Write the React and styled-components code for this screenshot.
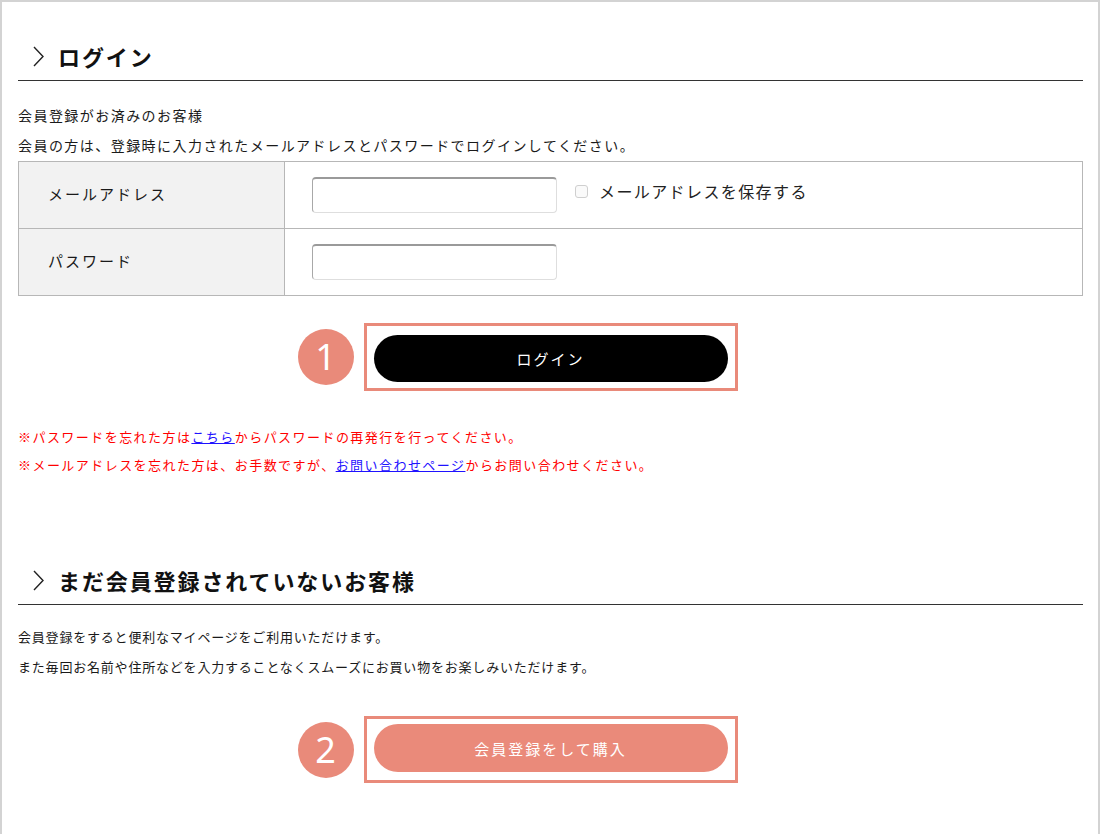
import React from "react";
import styled, { createGlobalStyle } from "styled-components";

const GlobalStyle = createGlobalStyle`
  html, body {
    margin: 0;
    padding: 0;
    background: #fff;
  }
  body {
    font-family: "Noto Sans CJK JP", "Noto Sans", sans-serif;
    color: #1a1a1a;
  }
`;

const Frame = styled.div`
  box-sizing: border-box;
  width: 1100px;
  min-height: 834px;
  border: 2px solid #d3d3d3;
  border-bottom: none;
  padding: 0 15px 40px 16px;
`;

const Section = styled.section`
  padding-top: ${(p) => p.top}px;
`;

const Heading = styled.h2`
  display: flex;
  align-items: center;
  gap: 14px;
  margin: 0;
  padding: 0 0 8px 15px;
  height: 32px;
  font-size: 22px;
  line-height: 32px;
  font-weight: 700;
  letter-spacing: 1.9px;
  border-bottom: 1px solid #333;
  color: #111;
`;

const Chevron = () => (
  <svg width="11" height="21" viewBox="0 0 11 21" fill="none">
    <path d="M1 1 L10 10.5 L1 20" stroke="#222" strokeWidth="1.4" />
  </svg>
);

const Lead = styled.div`
  margin-top: ${(p) => p.gap}px;
  font-size: ${(p) => p.size}px;
  letter-spacing: ${(p) => p.spacing}px;
  line-height: 30px;
  p {
    margin: 0;
  }
`;

const Table = styled.div`
  display: grid;
  grid-template-columns: 266px 1fr;
  margin-top: 1px;
  border: 1px solid #b7b7b7;
  border-bottom: none;
`;

const Label = styled.div`
  display: flex;
  align-items: center;
  box-sizing: border-box;
  height: 67px;
  padding: 0 0 4px 29px;
  background: #f2f2f2;
  border-right: 1px solid #b7b7b7;
  border-bottom: 1px solid #b7b7b7;
  font-size: 15px;
  letter-spacing: 2px;
`;

const Field = styled.div`
  display: flex;
  align-items: center;
  box-sizing: border-box;
  padding: 0 0 0 27px;
  height: 67px;
  gap: 18px;
  border-bottom: 1px solid #b7b7b7;
`;

const Input = styled.input`
  box-sizing: border-box;
  width: 245px;
  height: 36px;
  border: 1px solid #dedede;
  border-top: 2px solid #9a9a9a;
  border-left: 1px solid #a8a8a8;
  border-radius: 4px;
  background: #fff;
  outline: none;
`;

const Check = styled.label`
  display: flex;
  align-items: center;
  gap: 11px;
  font-size: 16px;
  letter-spacing: 1.4px;
  margin-top: -8px;
  color: #222;
`;

const Box = styled.span`
  display: inline-block;
  width: 11px;
  height: 11px;
  border: 1px solid #cfcfcf;
  border-radius: 3px;
  background: #fafafa;
`;

const ActionRow = styled.div`
  display: flex;
  justify-content: center;
  margin-top: ${(p) => p.gap}px;
`;

const Highlight = styled.div`
  position: relative;
  box-sizing: border-box;
  width: 374px;
  border: 3px solid #e98a7a;
  padding: ${(p) => p.pad};
`;

const Badge = styled.span`
  position: absolute;
  left: -69px;
  top: 50%;
  transform: translateY(-50%);
  width: 56px;
  height: 56px;
  border-radius: 50%;
  background: #e98a7a;
  color: #fff;
  display: flex;
  align-items: center;
  justify-content: center;
  font-family: "Noto Sans", sans-serif;
  font-size: 36px;
  font-weight: 400;
  line-height: 1;
`;

const PillButton = styled.button`
  display: block;
  width: 100%;
  height: ${(p) => p.h}px;
  border: none;
  border-radius: 24px;
  background: ${(p) => (p.salmon ? "#ea8a7a" : "#000")};
  color: #fff;
  font-family: "Noto Sans CJK JP", sans-serif;
  font-size: 15px;
  letter-spacing: 2px;
  cursor: pointer;
`;

const Notes = styled.div`
  margin-top: 32px;
  color: #f00;
  font-size: 13px;
  letter-spacing: 1.45px;
  line-height: 28px;
  p {
    margin: 0;
  }
  a {
    color: #1f12ff;
    text-decoration: underline;
  }
`;

export default function App() {
  return (
    <>
      <GlobalStyle />
      <Frame>
        <Section top={38}>
          <Heading>
            <Chevron />
            ログイン
          </Heading>
          <Lead gap={19} size={14} spacing={1.45}>
            <p>会員登録がお済みのお客様</p>
            <p>会員の方は、登録時に入力されたメールアドレスとパスワードでログインしてください。</p>
          </Lead>
          <Table>
            <Label>メールアドレス</Label>
            <Field>
              <Input type="text" />
              <Check>
                <Box />
                メールアドレスを保存する
              </Check>
            </Field>
            <Label>パスワード</Label>
            <Field>
              <Input type="password" />
            </Field>
          </Table>
          <ActionRow gap={27}>
            <Highlight pad="9px 7px 6px">
              <Badge>1</Badge>
              <PillButton h={47}>ログイン</PillButton>
            </Highlight>
          </ActionRow>
          <Notes>
            <p>
              ※パスワードを忘れた方は<a href="#">こちら</a>からパスワードの再発行を行ってください。
            </p>
            <p>
              ※メールアドレスを忘れた方は、お手数ですが、<a href="#">お問い合わせページ</a>からお問い合わせください。
            </p>
          </Notes>
        </Section>
        <Section top={85}>
          <Heading>
            <Chevron />
            まだ会員登録されていないお客様
          </Heading>
          <Lead gap={17} size={13} spacing={0.8}>
            <p>会員登録をすると便利なマイページをご利用いただけます。</p>
            <p>また毎回お名前や住所などを入力することなくスムーズにお買い物をお楽しみいただけます。</p>
          </Lead>
          <ActionRow gap={34}>
            <Highlight pad="5px 7px 8px">
              <Badge>2</Badge>
              <PillButton salmon h={48}>会員登録をして購入</PillButton>
            </Highlight>
          </ActionRow>
        </Section>
      </Frame>
    </>
  );
}
